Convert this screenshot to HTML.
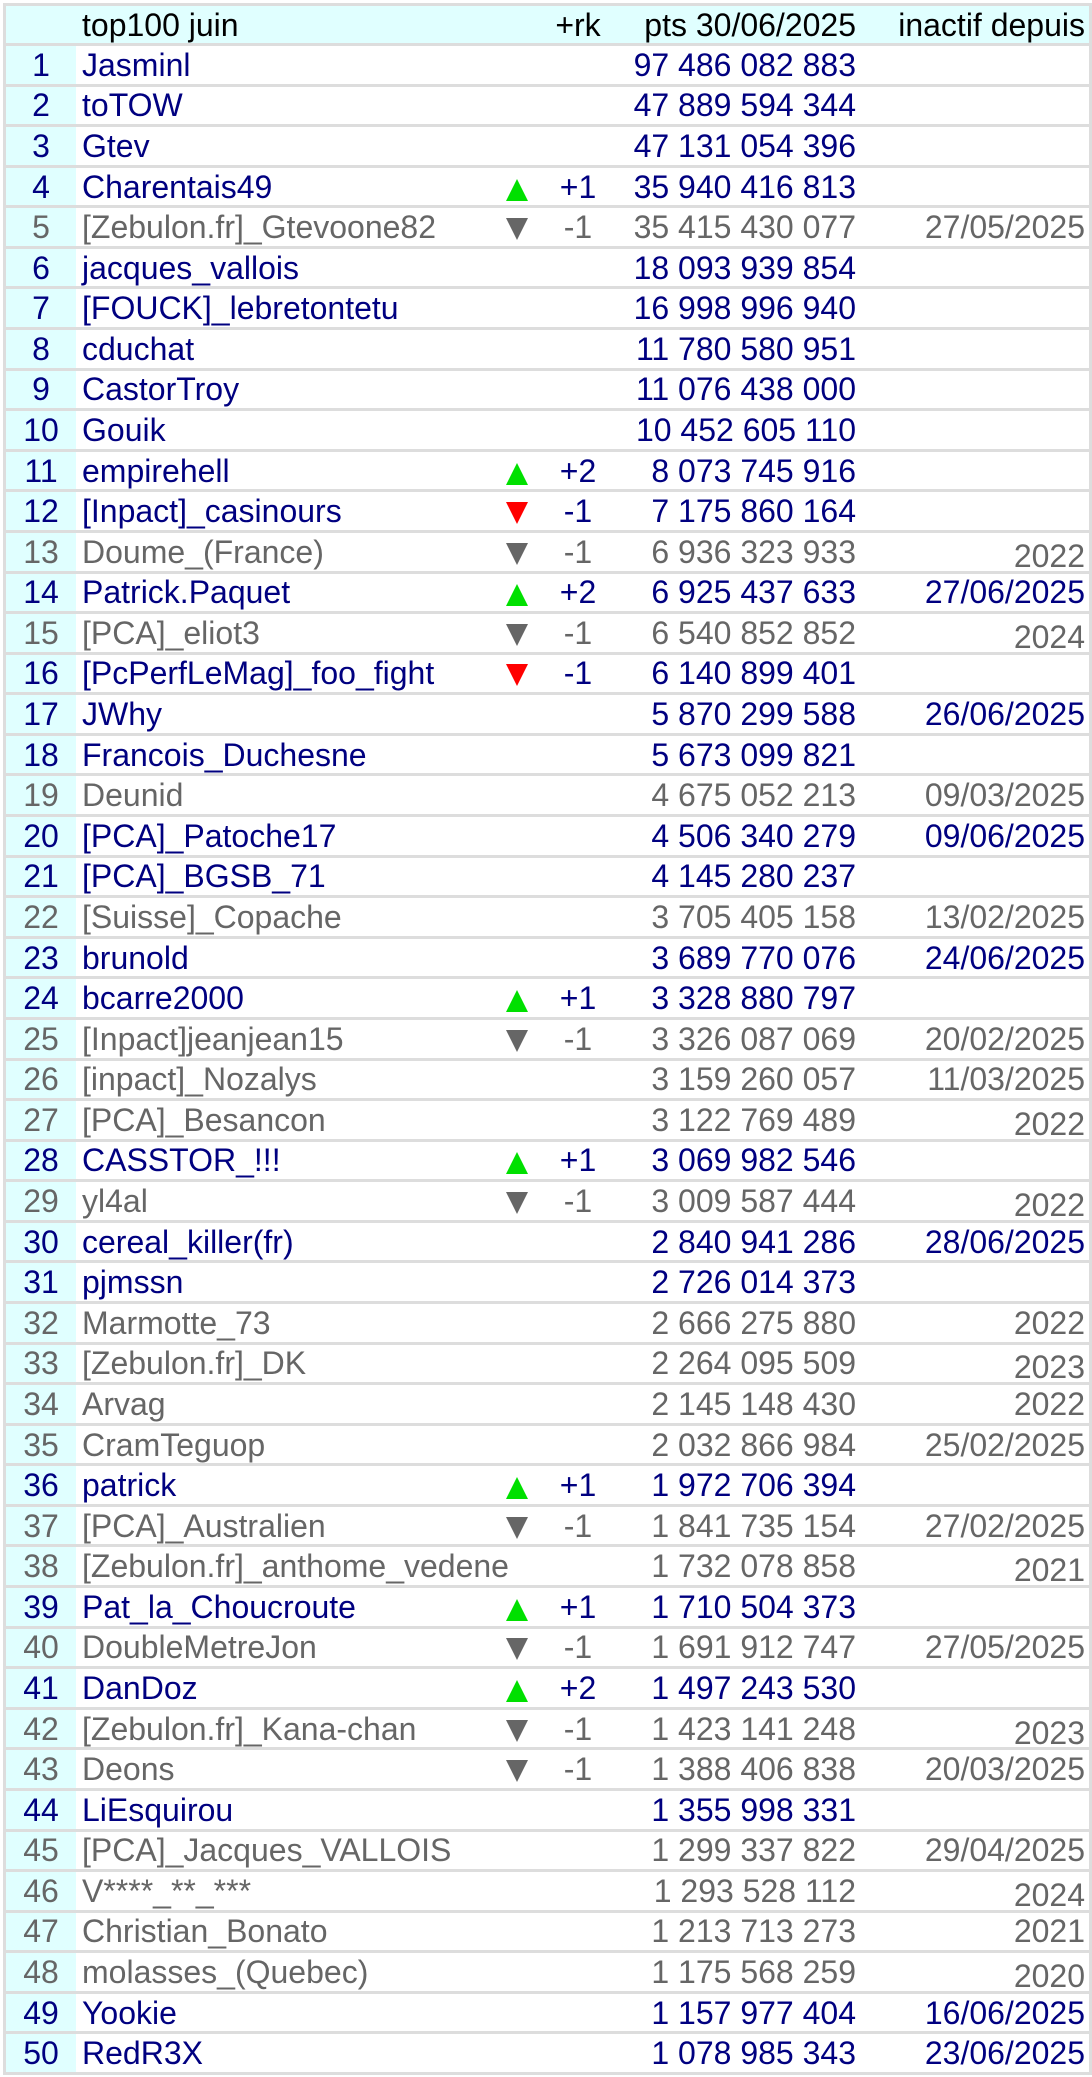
<!DOCTYPE html>
<html><head><meta charset="utf-8"><style>
html,body{margin:0;padding:0;background:#fff;}
body{width:1092px;height:2077px;overflow:hidden;font-family:"Liberation Sans",sans-serif;font-size:32px;}
#t{position:absolute;left:3px;top:3px;width:1083px;height:2066px;border:3px solid #ddd;display:grid;grid-template-rows:37px repeat(50,1fr);background:#ddd;row-gap:3px;}
.r{display:grid;grid-template-columns:70px 416px 50px 72px 250px 1fr;background:#fff;align-items:center;color:#000080;line-height:1;}
.r.i{color:#666;}
.r>div{white-space:nowrap;}
.r>div:nth-child(1){background:#e0ffff;height:100%;display:flex;align-items:center;justify-content:center;}
.r>div:nth-child(2){padding-left:6px;}
.r>div:nth-child(3){display:flex;justify-content:center;}
.r>div:nth-child(4){text-align:center;}
.r>div:nth-child(5){text-align:right;padding-right:8px;}
.r>div:nth-child(6){text-align:right;padding-right:4px;}
.h{background:#e0ffff;color:#000;}
.h>div:nth-child(1){background:#e0ffff;}
.u::before{content:"";display:block;width:0;height:0;border-left:11px solid transparent;border-right:11px solid transparent;border-bottom:22px solid #00e000;margin-top:6px;}
.d::before,.g::before{content:"";display:block;width:0;height:0;border-left:11px solid transparent;border-right:11px solid transparent;border-top:22px solid #f00;margin-top:4px;}
.g::before{border-top-color:#666;}
.y{position:relative;top:4px;}
</style></head><body><div id="t">
<div class="r h"><div></div><div>top100 juin</div><div></div><div>+rk</div><div>pts 30/06/2025</div><div>inactif depuis</div></div>
<div class="r"><div>1</div><div>Jasminl</div><div></div><div></div><div>97 486 082 883</div><div></div></div>
<div class="r"><div>2</div><div>toTOW</div><div></div><div></div><div>47 889 594 344</div><div></div></div>
<div class="r"><div>3</div><div>Gtev</div><div></div><div></div><div>47 131 054 396</div><div></div></div>
<div class="r"><div>4</div><div>Charentais49</div><div class="u"></div><div>+1</div><div>35 940 416 813</div><div></div></div>
<div class="r i"><div>5</div><div>[Zebulon.fr]_Gtevoone82</div><div class="g"></div><div>-1</div><div>35 415 430 077</div><div>27/05/2025</div></div>
<div class="r"><div>6</div><div>jacques_vallois</div><div></div><div></div><div>18 093 939 854</div><div></div></div>
<div class="r"><div>7</div><div>[FOUCK]_lebretontetu</div><div></div><div></div><div>16 998 996 940</div><div></div></div>
<div class="r"><div>8</div><div>cduchat</div><div></div><div></div><div>11 780 580 951</div><div></div></div>
<div class="r"><div>9</div><div>CastorTroy</div><div></div><div></div><div>11 076 438 000</div><div></div></div>
<div class="r"><div>10</div><div>Gouik</div><div></div><div></div><div>10 452 605 110</div><div></div></div>
<div class="r"><div>11</div><div>empirehell</div><div class="u"></div><div>+2</div><div>8 073 745 916</div><div></div></div>
<div class="r"><div>12</div><div>[Inpact]_casinours</div><div class="d"></div><div>-1</div><div>7 175 860 164</div><div></div></div>
<div class="r i"><div>13</div><div>Doume_(France)</div><div class="g"></div><div>-1</div><div>6 936 323 933</div><div class="y">2022</div></div>
<div class="r"><div>14</div><div>Patrick.Paquet</div><div class="u"></div><div>+2</div><div>6 925 437 633</div><div>27/06/2025</div></div>
<div class="r i"><div>15</div><div>[PCA]_eliot3</div><div class="g"></div><div>-1</div><div>6 540 852 852</div><div class="y">2024</div></div>
<div class="r"><div>16</div><div>[PcPerfLeMag]_foo_fight</div><div class="d"></div><div>-1</div><div>6 140 899 401</div><div></div></div>
<div class="r"><div>17</div><div>JWhy</div><div></div><div></div><div>5 870 299 588</div><div>26/06/2025</div></div>
<div class="r"><div>18</div><div>Francois_Duchesne</div><div></div><div></div><div>5 673 099 821</div><div></div></div>
<div class="r i"><div>19</div><div>Deunid</div><div></div><div></div><div>4 675 052 213</div><div>09/03/2025</div></div>
<div class="r"><div>20</div><div>[PCA]_Patoche17</div><div></div><div></div><div>4 506 340 279</div><div>09/06/2025</div></div>
<div class="r"><div>21</div><div>[PCA]_BGSB_71</div><div></div><div></div><div>4 145 280 237</div><div></div></div>
<div class="r i"><div>22</div><div>[Suisse]_Copache</div><div></div><div></div><div>3 705 405 158</div><div>13/02/2025</div></div>
<div class="r"><div>23</div><div>brunold</div><div></div><div></div><div>3 689 770 076</div><div>24/06/2025</div></div>
<div class="r"><div>24</div><div>bcarre2000</div><div class="u"></div><div>+1</div><div>3 328 880 797</div><div></div></div>
<div class="r i"><div>25</div><div>[Inpact]jeanjean15</div><div class="g"></div><div>-1</div><div>3 326 087 069</div><div>20/02/2025</div></div>
<div class="r i"><div>26</div><div>[inpact]_Nozalys</div><div></div><div></div><div>3 159 260 057</div><div>11/03/2025</div></div>
<div class="r i"><div>27</div><div>[PCA]_Besancon</div><div></div><div></div><div>3 122 769 489</div><div class="y">2022</div></div>
<div class="r"><div>28</div><div>CASSTOR_!!!</div><div class="u"></div><div>+1</div><div>3 069 982 546</div><div></div></div>
<div class="r i"><div>29</div><div>yl4al</div><div class="g"></div><div>-1</div><div>3 009 587 444</div><div class="y">2022</div></div>
<div class="r"><div>30</div><div>cereal_killer(fr)</div><div></div><div></div><div>2 840 941 286</div><div>28/06/2025</div></div>
<div class="r"><div>31</div><div>pjmssn</div><div></div><div></div><div>2 726 014 373</div><div></div></div>
<div class="r i"><div>32</div><div>Marmotte_73</div><div></div><div></div><div>2 666 275 880</div><div>2022</div></div>
<div class="r i"><div>33</div><div>[Zebulon.fr]_DK</div><div></div><div></div><div>2 264 095 509</div><div class="y">2023</div></div>
<div class="r i"><div>34</div><div>Arvag</div><div></div><div></div><div>2 145 148 430</div><div>2022</div></div>
<div class="r i"><div>35</div><div>CramTeguop</div><div></div><div></div><div>2 032 866 984</div><div>25/02/2025</div></div>
<div class="r"><div>36</div><div>patrick</div><div class="u"></div><div>+1</div><div>1 972 706 394</div><div></div></div>
<div class="r i"><div>37</div><div>[PCA]_Australien</div><div class="g"></div><div>-1</div><div>1 841 735 154</div><div>27/02/2025</div></div>
<div class="r i"><div>38</div><div>[Zebulon.fr]_anthome_vedene</div><div></div><div></div><div>1 732 078 858</div><div class="y">2021</div></div>
<div class="r"><div>39</div><div>Pat_la_Choucroute</div><div class="u"></div><div>+1</div><div>1 710 504 373</div><div></div></div>
<div class="r i"><div>40</div><div>DoubleMetreJon</div><div class="g"></div><div>-1</div><div>1 691 912 747</div><div>27/05/2025</div></div>
<div class="r"><div>41</div><div>DanDoz</div><div class="u"></div><div>+2</div><div>1 497 243 530</div><div></div></div>
<div class="r i"><div>42</div><div>[Zebulon.fr]_Kana-chan</div><div class="g"></div><div>-1</div><div>1 423 141 248</div><div class="y">2023</div></div>
<div class="r i"><div>43</div><div>Deons</div><div class="g"></div><div>-1</div><div>1 388 406 838</div><div>20/03/2025</div></div>
<div class="r"><div>44</div><div>LiEsquirou</div><div></div><div></div><div>1 355 998 331</div><div></div></div>
<div class="r i"><div>45</div><div>[PCA]_Jacques_VALLOIS</div><div></div><div></div><div>1 299 337 822</div><div>29/04/2025</div></div>
<div class="r i"><div>46</div><div>V****_**_***</div><div></div><div></div><div>1 293 528 112</div><div class="y">2024</div></div>
<div class="r i"><div>47</div><div>Christian_Bonato</div><div></div><div></div><div>1 213 713 273</div><div>2021</div></div>
<div class="r i"><div>48</div><div>molasses_(Quebec)</div><div></div><div></div><div>1 175 568 259</div><div class="y">2020</div></div>
<div class="r"><div>49</div><div>Yookie</div><div></div><div></div><div>1 157 977 404</div><div>16/06/2025</div></div>
<div class="r"><div>50</div><div>RedR3X</div><div></div><div></div><div>1 078 985 343</div><div>23/06/2025</div></div>
</div></body></html>
